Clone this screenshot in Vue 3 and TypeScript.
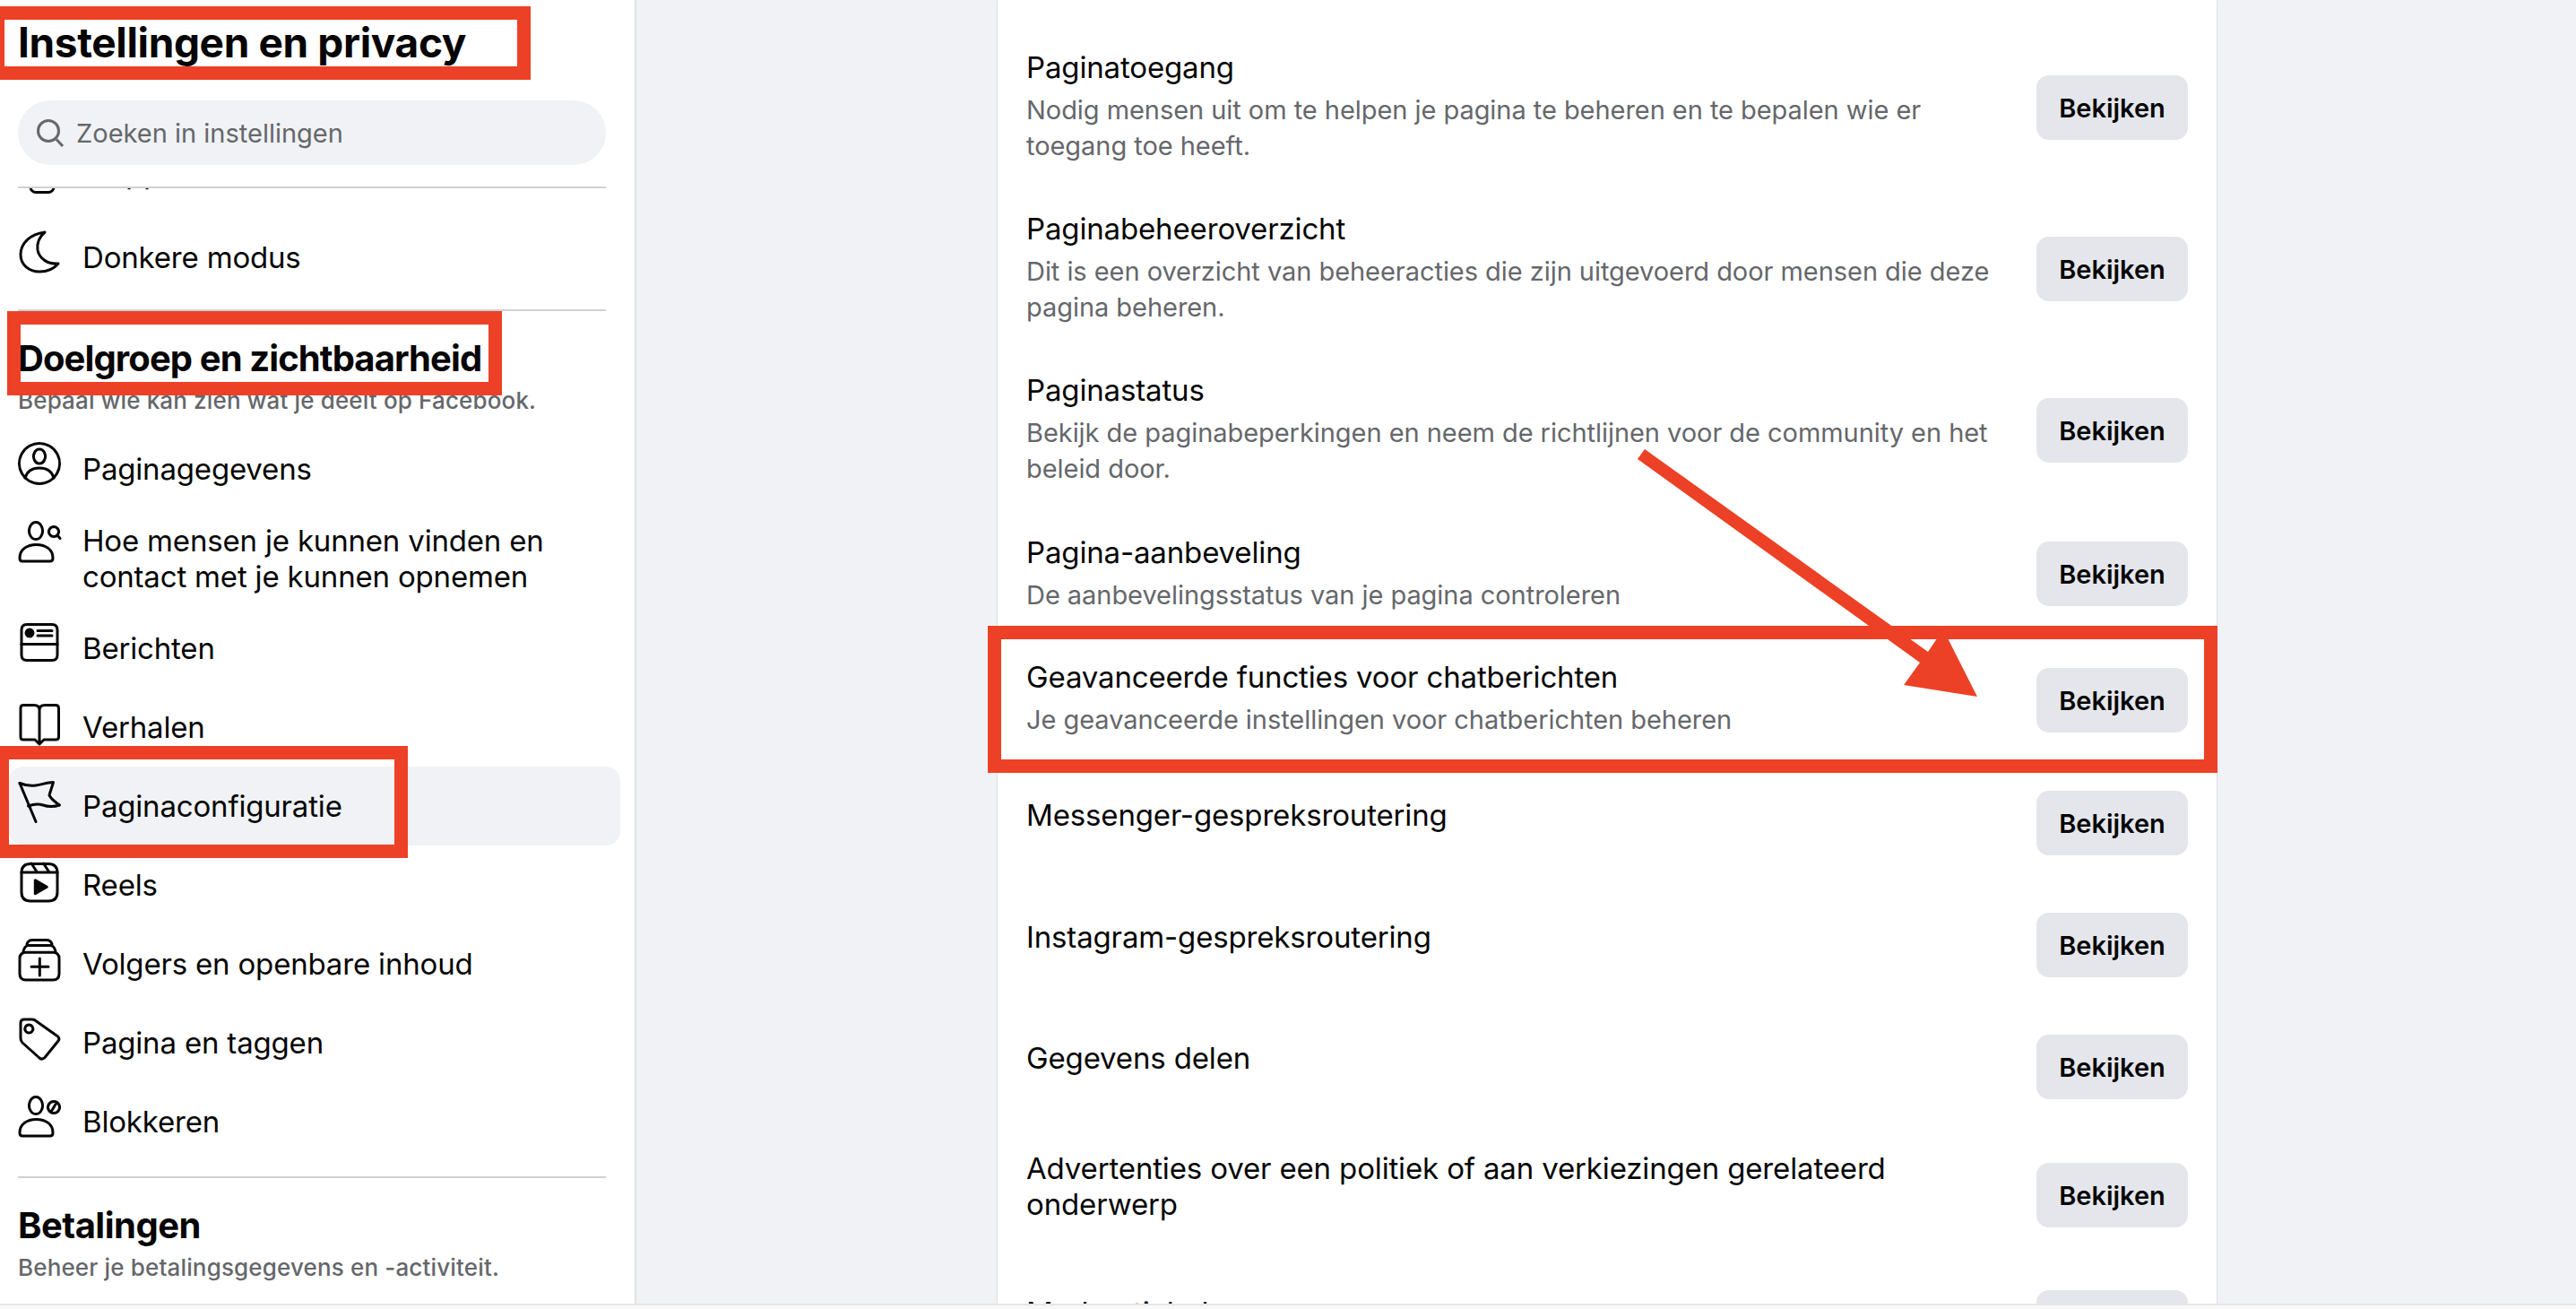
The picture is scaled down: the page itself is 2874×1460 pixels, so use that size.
<script setup lang="ts">
interface MenuItem {
  label: string
  icon: string
  active?: boolean
  tall?: boolean
}

interface SettingRow {
  title: string
  desc?: string
  height: number
  top: number
}

const PERSON = 'M20 2.5a7.5 9.5 0 1 0 .01 0Z M2 42.5C2 33 10 27.5 20.5 27.5S39 33 39 42.5Q39 46 36 46H5Q2 46 2 42.5Z'

const icons: Record<string, string[]> = {
  moon: ['M30 2C14 4 3 14 3 27C3 38 12 46 24 46C32 46 40 43 45 37C34 38 24 32 22 22C21 14 24 7 30 2Z'],
  profile: [
    'M24 1.5a22.5 22.5 0 1 0 .01 0Z',
    'M24 8a6.5 8 0 1 0 .01 0Z',
    'M8 40C10 33 16 29 24 29S38 33 40 40',
  ],
  search: [PERSON, 'M40 7.5a5.5 5.5 0 1 0 .01 0Z M44 17L47 20.5'],
  card: [
    'M10 3.5H38Q44 3.5 44 9.5V37.5Q44 43.5 38 43.5H10Q4 43.5 4 37.5V9.5Q4 3.5 10 3.5Z',
    'M4 25.5H44',
    'M22 10.5H38 M22 16H38',
  ],
  book: ['M24 49L19 44H6Q3 44 3 41V9Q3 5.5 6 5.5H18Q24 5.5 24 11Q24 5.5 30 5.5H42Q45.5 5.5 45.5 9V41Q45.5 44 42 44H29Z M24 11V49'],
  flag: [
    'M2 4.5L20 47.5',
    'M2 4.5C8 7 13 8 20 7C27 6 33 3.5 39.5 3.5C38 9 36 14 35 18C37 22 42 26 46.5 29C40 31 34 31 28 29C22 27 17 28 11.5 30',
  ],
  reels: [
    'M14 6.5H34Q44 6.5 44 16.5V38Q44 48 34 48H14Q4 48 4 38V16.5Q4 6.5 14 6.5Z',
    'M4 16H44 M15 6L21.5 16 M28.5 6L35 16',
  ],
  stack: [
    'M9 17.2H39Q46 17.2 46 24.2V41Q46 48 39 48H9Q2 48 2 41V24.2Q2 17.2 9 17.2Z',
    'M6 16C7 12 9 9.5 12 9.5H36C39 9.5 41 12 42 16',
    'M10 8C11 5 13 3.5 16 3.5H32C35 3.5 37 5 38 8',
    'M24.3 24V43 M15 33.3H34',
  ],
  tag: [
    'M3 8Q3 4 7 4H16Q18.5 4 20.5 6L44.5 23Q47 25.5 45 28L30 46.5Q27 49.5 24 47L5 30Q3 28 3 25Z',
    'M12.3 10a4.5 4.5 0 1 0 .01 0Z',
  ],
  block: [PERSON, 'M40 7.5a6.5 6.5 0 1 0 .01 0Z M37 19L43 9'],
}

const filled: Record<string, string> = {
  card: 'M13 9a4 4 0 1 0 .01 0Z',
  reels: 'M19.3 24.7L32.3 32.3L19.3 39.7Z',
}

const audience: MenuItem[] = [
  { label: 'Paginagegevens', icon: 'profile' },
  { label: 'Hoe mensen je kunnen vinden en contact met je kunnen opnemen', icon: 'search', tall: true },
  { label: 'Berichten', icon: 'card' },
  { label: 'Verhalen', icon: 'book' },
  { label: 'Paginaconfiguratie', icon: 'flag', active: true },
  { label: 'Reels', icon: 'reels' },
  { label: 'Volgers en openbare inhoud', icon: 'stack' },
  { label: 'Pagina en taggen', icon: 'tag' },
  { label: 'Blokkeren', icon: 'block' },
]

const rows: SettingRow[] = [
  {
    title: 'Paginatoegang',
    desc: 'Nodig mensen uit om te helpen je pagina te beheren en te bepalen wie er toegang toe heeft.',
    height: 180,
    top: 25,
  },
  {
    title: 'Paginabeheeroverzicht',
    desc: 'Dit is een overzicht van beheeracties die zijn uitgevoerd door mensen die deze pagina beheren.',
    height: 180,
    top: 25,
  },
  {
    title: 'Paginastatus',
    desc: 'Bekijk de paginabeperkingen en neem de richtlijnen voor de community en het beleid door.',
    height: 180,
    top: 25,
  },
  {
    title: 'Pagina-aanbeveling',
    desc: 'De aanbevelingsstatus van je pagina controleren',
    height: 140,
    top: 26,
  },
  {
    title: 'Geavanceerde functies voor chatberichten',
    desc: 'Je geavanceerde instellingen voor chatberichten beheren',
    height: 142,
    top: 25,
  },
  { title: 'Messenger-gespreksroutering', height: 132, top: 37 },
  { title: 'Instagram-gespreksroutering', height: 140, top: 41 },
  { title: 'Gegevens delen', height: 132, top: 36 },
  {
    title: 'Advertenties over een politiek of aan verkiezingen gerelateerd onderwerp',
    height: 154,
    top: 27,
  },
  { title: 'Moderatiehulp', height: 130, top: 34 },
]
</script>

<template>
  <div class="page">
    <div class="content">
      <aside class="sidebar">
        <h1 class="page-title">Instellingen en privacy</h1>
        <div class="search">
          <svg class="search-icon" viewBox="0 0 32 32" fill="none">
            <circle cx="14" cy="14" r="11.5" />
            <path d="M23 23.5L30 31" />
          </svg>
          <span>Zoeken in instellingen</span>
        </div>

        <div class="peek">
          <div class="menu-item">
            <svg class="item-icon" viewBox="0 0 48 48" fill="none">
              <rect x="14" y="-6" width="26" height="57.5" rx="6" />
            </svg>
            <span>Mappen</span>
          </div>
        </div>
        <div class="menu-item">
          <svg class="item-icon" viewBox="0 0 48 48" fill="none">
            <path v-for="d in icons.moon" :key="d" :d="d" />
          </svg>
          <span>Donkere modus</span>
        </div>

        <section class="group">
          <h2>Doelgroep en zichtbaarheid</h2>
          <p>Bepaal wie kan zien wat je deelt op Facebook.</p>
        </section>
        <div
          v-for="item in audience"
          :key="item.label"
          class="menu-item"
          :class="{ active: item.active, tall: item.tall }"
        >
          <svg class="item-icon" viewBox="0 0 48 48" fill="none">
            <path v-for="d in icons[item.icon]" :key="d" :d="d" />
            <path v-if="filled[item.icon]" class="solid" :d="filled[item.icon]" />
          </svg>
          <span>{{ item.label }}</span>
        </div>

        <section class="group payments">
          <h2>Betalingen</h2>
          <p>Beheer je betalingsgegevens en -activiteit.</p>
        </section>
      </aside>

      <main class="main">
        <div class="card">
          <div
            v-for="row in rows"
            :key="row.title"
            class="row"
            :style="{ height: row.height + 'px', paddingTop: row.top + 'px' }"
          >
            <div class="row-text">
              <div class="row-title">{{ row.title }}</div>
              <div v-if="row.desc" class="row-desc">{{ row.desc }}</div>
            </div>
            <button class="view-btn" :style="{ marginTop: row.height / 2 - row.top - 36 + 'px' }">Bekijken</button>
          </div>
        </div>
      </main>
    </div>
    <div class="strip"></div>

    <!-- red annotations drawn on top of the screenshot -->
    <div class="mark mark-title"></div>
    <div class="mark mark-group"></div>
    <div class="mark mark-item"></div>
    <div class="mark mark-row"></div>
    <svg class="arrow" viewBox="0 0 2874 1460">
      <polygon points="1835,501 2151,727 2168,702 2206,777 2124,764 2142,739 1827,512" />
    </svg>
  </div>
</template>

<style scoped>
.page {
  position: relative;
  width: 2874px;
  height: 1460px;
  overflow: hidden;
  background: #f8f8f8;
  color: #050505;
  font-family: Inter, "Liberation Sans", sans-serif;
}
.content {
  display: flex;
  height: 1454px;
  overflow: hidden;
}
.strip {
  height: 6px;
  border-top: 2px solid #e6e6e6;
  box-sizing: border-box;
}
.sidebar {
  flex: none;
  width: 708px;
  height: 1454px;
  overflow: hidden;
  background: #fff;
  border-right: 2px solid #dfe1e5;
}
.page-title {
  margin: 0 0 18px;
  padding-left: 20px;
  font-size: 46px;
  line-height: 94px;
  font-weight: 700;
  letter-spacing: -0.36px;
}
.search {
  display: flex;
  align-items: center;
  gap: 13px;
  height: 72px;
  margin: 0 32px 0 20px;
  padding-left: 20px;
  border-radius: 36px;
  background: #f0f2f5;
  color: #65676b;
  font-size: 29px;
}
.search-icon {
  width: 32px;
  height: 32px;
}
.search-icon circle,
.search-icon path {
  stroke: #65676b;
  stroke-width: 3;
}
.peek {
  height: 33px;
  margin: 24px 32px 0 20px;
  border-top: 2px solid #ced0d4;
  overflow: hidden;
}
.peek .menu-item {
  margin: -61px 0 0 -10px;
  width: 666px;
}
.menu-item {
  display: flex;
  align-items: center;
  gap: 24px;
  box-sizing: border-box;
  min-height: 88px;
  margin: 0 16px 0 10px;
  padding-left: 10px;
  border-radius: 16px;
  font-size: 33px;
  line-height: 40px;
  letter-spacing: -0.18px;
}
.menu-item.active {
  background: #f0f2f5;
}
.menu-item.tall {
  padding-top: 16px;
  padding-bottom: 16px;
}
.item-icon {
  flex: none;
  width: 48px;
  height: 48px;
  margin-top: -12px;
  overflow: visible;
}
.menu-item.tall .item-icon {
  align-self: flex-start;
  margin-top: -3px;
}
.item-icon path,
.item-icon rect {
  stroke: #050505;
  stroke-width: 3;
  stroke-linecap: round;
  stroke-linejoin: round;
}
.item-icon .solid {
  fill: #050505;
}
.group {
  margin: 14px 32px 14px 20px;
  padding-top: 29px;
  border-top: 2px solid #ced0d4;
}
.group h2 {
  margin: 0;
  font-size: 40px;
  line-height: 48px;
  font-weight: 700;
  letter-spacing: -0.9px;
}
.group p {
  margin: 5px 0 0;
  color: #65676b;
  font-size: 26px;
  line-height: 36px;
  font-weight: 500;
  letter-spacing: 0.15px;
}
.payments {
  margin-top: 17px;
}
.payments h2 {
  letter-spacing: -0.5px;
}
.main {
  flex: 1;
  display: flex;
  justify-content: center;
  padding-left: 2px;
  background: #f0f2f5;
}
.card {
  width: 1360px;
  padding: 30px 32px 0 32px;
  box-sizing: border-box;
  background: #fff;
  box-shadow: 0 0 2px rgba(0, 0, 0, 0.2);
}
.row {
  display: flex;
  align-items: flex-start;
  justify-content: space-between;
  box-sizing: border-box;
}
.row-text {
  width: 1086px;
}
.row-title {
  font-size: 33px;
  line-height: 40px;
  letter-spacing: -0.15px;
}
.row-desc {
  margin-top: 8px;
  color: #65676b;
  font-size: 29px;
  line-height: 40px;
  letter-spacing: -0.05px;
}
.view-btn {
  flex: none;
  width: 169px;
  height: 72px;
  padding: 0;
  border: 0;
  border-radius: 14px;
  background: #e4e6eb;
  color: #050505;
  font-family: inherit;
  font-size: 29px;
  font-weight: 600;
}
.mark {
  position: absolute;
  box-sizing: border-box;
  border: 15px solid #ec4126;
}
.mark-title {
  left: -10px;
  top: 7px;
  width: 602px;
  height: 82px;
}
.mark-group {
  left: 8px;
  top: 347px;
  width: 552px;
  height: 94px;
}
.mark-item {
  left: -5px;
  top: 832px;
  width: 460px;
  height: 125px;
}
.mark-row {
  left: 1102px;
  top: 698px;
  width: 1372px;
  height: 164px;
}
.arrow {
  position: absolute;
  left: 0;
  top: 0;
  width: 2874px;
  height: 1460px;
}
.arrow polygon {
  fill: #ec4126;
}
</style>

<style>
body {
  background: #f8f8f8;
}
</style>
